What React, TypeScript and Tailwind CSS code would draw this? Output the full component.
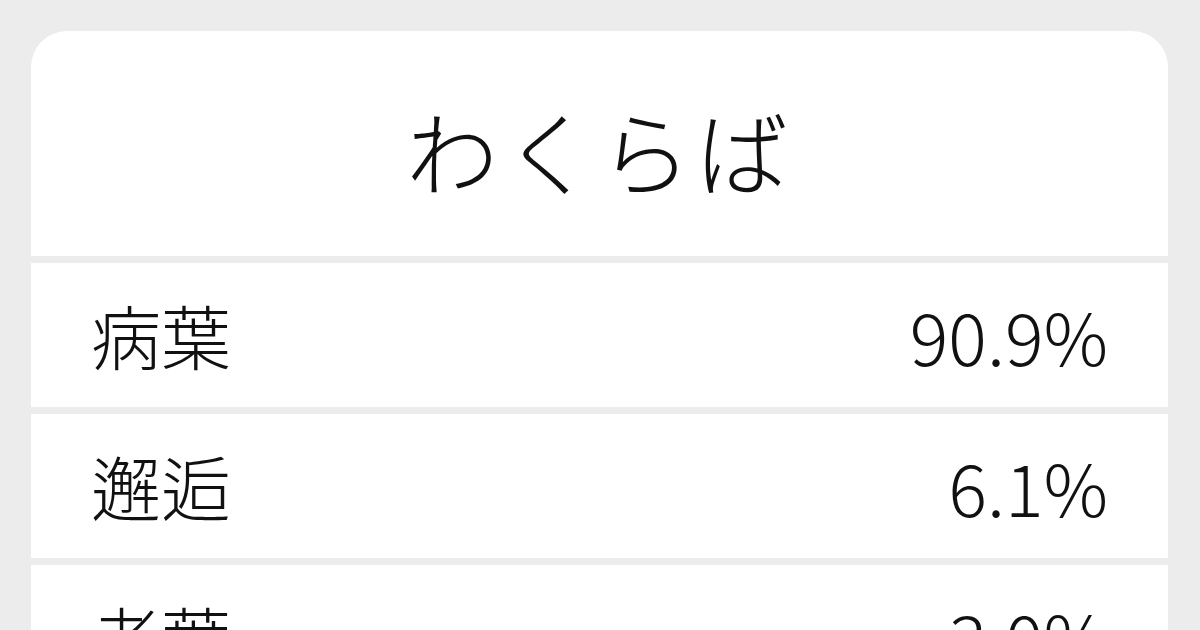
const rows = [
  { word: "病葉", rate: "90.9%" },
  { word: "邂逅", rate: "6.1%" },
  { word: "老葉", rate: "3.0%" },
];

export default function App() {
  return (
    <main
      className="h-[630px] w-[1200px] overflow-hidden bg-[#ececec] pl-[31px] pr-[32px] pt-[31px] text-[#111]"
      style={{ fontFamily: '"Noto Sans CJK JP", "Noto Sans", sans-serif' }}
    >
      <div className="flex flex-col gap-[7px] overflow-hidden rounded-t-[36px]">
        {/* Title */}
        <div className="flex h-[225px] items-center justify-center bg-white pt-[10px]">
          <h1 className="text-[92px] font-light leading-none tracking-[0.05em]">わくらば</h1>
        </div>

        {/* Rows */}
        {rows.map((r) => (
          <div
            key={r.word}
            className="flex h-[144px] items-center justify-between bg-white px-[60px] font-light leading-none"
          >
            <span className="text-[70px]">{r.word}</span>
            <span className="text-[72px]">{r.rate}</span>
          </div>
        ))}
      </div>
    </main>
  );
}
